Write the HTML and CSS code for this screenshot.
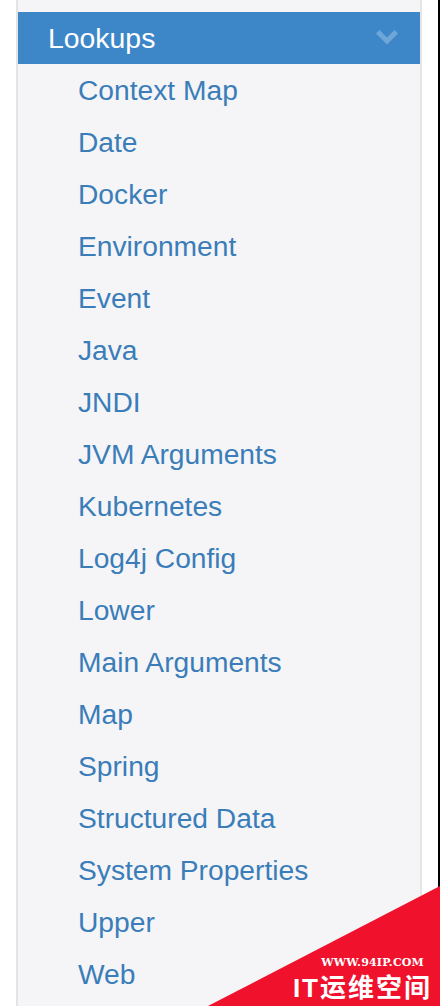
FILE: index.html
```html
<!DOCTYPE html>
<html>
<head>
<meta charset="utf-8">
<link rel="stylesheet" href="styles.css">
</head>
<body>
<div class="page">
  <div class="gutter"></div>
  <nav class="panel">
    <div class="header">
      <span class="title">Lookups</span>
      <svg class="chev" width="24" height="16" viewBox="0 0 24 16"><polygon points="1,4.5 4.5,1 12,8.5 19.5,1 23,4.5 12,15.5" fill="#6fa6d8"/></svg>
    </div>
    <ul class="items">
      <li>Context Map</li>
      <li>Date</li>
      <li>Docker</li>
      <li>Environment</li>
      <li>Event</li>
      <li>Java</li>
      <li>JNDI</li>
      <li>JVM Arguments</li>
      <li>Kubernetes</li>
      <li>Log4j Config</li>
      <li>Lower</li>
      <li>Main Arguments</li>
      <li>Map</li>
      <li>Spring</li>
      <li>Structured Data</li>
      <li>System Properties</li>
      <li>Upper</li>
      <li>Web</li>
    </ul>
  </nav>
  <div class="right"></div>
  <div class="edge"></div>
</div>
<div class="mark">
  <div class="mark-url">WWW.94IP.COM</div>
  <div class="mark-name">IT运维空间</div>
</div>
</body>
</html>
```

FILE: styles.css
```css
html, body {
  margin: 0;
  padding: 0;
  background: #ffffff;
  overflow: hidden;
}
.page {
  display: flex;
  height: 1006px;
  width: 440px;
}
.gutter {
  width: 16px;
  flex: none;
  background: #ffffff;
}
.panel {
  width: 402px;
  flex: none;
  border-left: 2px solid #e3e3e5;
  border-right: 2px solid #e6e6e8;
  background: #f5f5f7;
  padding-top: 12px;
  font-family: "Liberation Sans", Arial, sans-serif;
}
.header {
  height: 52px;
  background: #3d87c8;
  display: flex;
  align-items: center;
  justify-content: space-between;
  padding: 0 21px 0 30px;
}
.title {
  color: #ffffff;
  font-size: 28.4px;
  line-height: 52px;
}
.chev {
  display: block;
  margin-top: -2px;
}
.items {
  list-style: none;
  margin: 0;
  padding: 0 0 0 60px;
}
.items li {
  height: 52px;
  line-height: 52px;
  font-size: 28.2px;
  color: #3a7db9;
  white-space: nowrap;
}
.right {
  width: 16px;
  flex: none;
  background: #ffffff;
}
.edge {
  width: 4px;
  flex: none;
  background: #000000;
}
.mark {
  position: absolute;
  right: 0;
  bottom: 0;
  width: 232px;
  height: 120px;
  background: #f0122d;
  clip-path: polygon(100% 0, 100% 100%, 0 100%);
}
.mark-url {
  position: absolute;
  right: 16px;
  top: 70px;
  color: #ffffff;
  font-family: "DejaVu Serif", "Liberation Serif", serif;
  font-weight: bold;
  font-size: 11px;
  letter-spacing: 0.2px;
}
.mark-name {
  position: absolute;
  right: 8px;
  top: 87px;
  color: #ffffff;
  font-family: "Liberation Sans", "Noto Sans CJK SC", sans-serif;
  font-weight: bold;
  font-size: 26px;
  line-height: 30px;
  letter-spacing: 2px;
}
```
